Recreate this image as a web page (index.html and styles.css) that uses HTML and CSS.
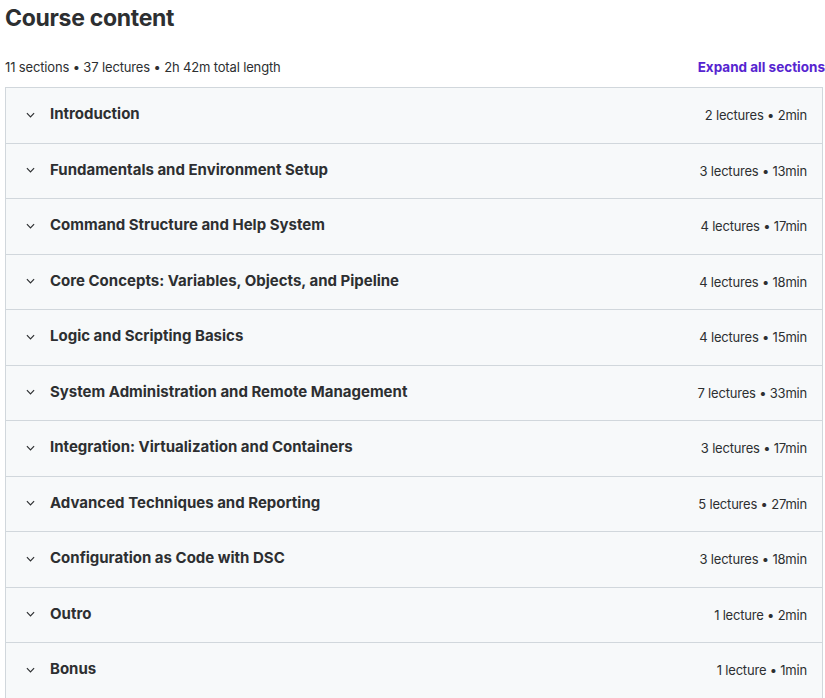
FILE: index.html
```html
<!DOCTYPE html>
<html>
  <head>
    <title>Course content</title>
    <link rel="stylesheet" href="styles.css">
  </head>
  <body>
    <div class="curriculum">
      <h2 class="title">Course content</h2>
      <div class="summary">
        <span class="stats">11 sections • 37 lectures • 2h 42m total length</span>
        <button class="expand-btn">Expand all sections</button>
      </div>

      <div class="sections">
        <div class="section">
          <svg class="chevron" viewBox="0 0 10 6"><path d="M1 1l4 4 4-4" /></svg>
          <span class="section-title">Introduction</span>
          <span class="section-meta">2 lectures • 2min</span>
        </div>
        <div class="section">
          <svg class="chevron" viewBox="0 0 10 6"><path d="M1 1l4 4 4-4" /></svg>
          <span class="section-title">Fundamentals and Environment Setup</span>
          <span class="section-meta">3 lectures • 13min</span>
        </div>
        <div class="section">
          <svg class="chevron" viewBox="0 0 10 6"><path d="M1 1l4 4 4-4" /></svg>
          <span class="section-title">Command Structure and Help System</span>
          <span class="section-meta">4 lectures • 17min</span>
        </div>
        <div class="section">
          <svg class="chevron" viewBox="0 0 10 6"><path d="M1 1l4 4 4-4" /></svg>
          <span class="section-title">Core Concepts: Variables, Objects, and Pipeline</span>
          <span class="section-meta">4 lectures • 18min</span>
        </div>
        <div class="section">
          <svg class="chevron" viewBox="0 0 10 6"><path d="M1 1l4 4 4-4" /></svg>
          <span class="section-title">Logic and Scripting Basics</span>
          <span class="section-meta">4 lectures • 15min</span>
        </div>
        <div class="section">
          <svg class="chevron" viewBox="0 0 10 6"><path d="M1 1l4 4 4-4" /></svg>
          <span class="section-title">System Administration and Remote Management</span>
          <span class="section-meta">7 lectures • 33min</span>
        </div>
        <div class="section">
          <svg class="chevron" viewBox="0 0 10 6"><path d="M1 1l4 4 4-4" /></svg>
          <span class="section-title">Integration: Virtualization and Containers</span>
          <span class="section-meta">3 lectures • 17min</span>
        </div>
        <div class="section">
          <svg class="chevron" viewBox="0 0 10 6"><path d="M1 1l4 4 4-4" /></svg>
          <span class="section-title">Advanced Techniques and Reporting</span>
          <span class="section-meta">5 lectures • 27min</span>
        </div>
        <div class="section">
          <svg class="chevron" viewBox="0 0 10 6"><path d="M1 1l4 4 4-4" /></svg>
          <span class="section-title">Configuration as Code with DSC</span>
          <span class="section-meta">3 lectures • 18min</span>
        </div>
        <div class="section">
          <svg class="chevron" viewBox="0 0 10 6"><path d="M1 1l4 4 4-4" /></svg>
          <span class="section-title">Outro</span>
          <span class="section-meta">1 lecture • 2min</span>
        </div>
        <div class="section">
          <svg class="chevron" viewBox="0 0 10 6"><path d="M1 1l4 4 4-4" /></svg>
          <span class="section-title">Bonus</span>
          <span class="section-meta">1 lecture • 1min</span>
        </div>
      </div>
    </div>
  </body>
</html>
```

FILE: styles.css
```css
body {
  margin: 0;
  background: #ffffff;
  font-family: Inter, "Noto Sans", sans-serif;
  color: #2d2f31;
}
.curriculum {
  width: 818px;
  margin-left: 5px;
}
.title {
  margin: 0;
  padding-top: 4px;
  height: 36px;
  font-size: 23px;
  font-weight: 700;
  letter-spacing: -0.3px;
  line-height: 28px;
}
.summary {
  display: flex;
  justify-content: space-between;
  align-items: center;
  box-sizing: border-box;
  height: 47px;
  padding-top: 6px;
  margin-right: -2px;
  font-size: 13px;
}
.stats {
  color: #2d2f31;
  letter-spacing: -0.15px;
}
.expand-btn {
  background: none;
  border: none;
  padding: 0;
  font-family: inherit;
  font-size: 13.5px;
  font-weight: 700;
  color: #5624d0;
  cursor: pointer;
}
.sections {
  border: 1px solid #d1d7dc;
  border-bottom: none;
}
.section {
  display: flex;
  align-items: center;
  height: 54.5px;
  padding: 0 15px 0 20px;
  background: #f7f9fa;
  border-bottom: 1px solid #d1d7dc;
  cursor: pointer;
}
.chevron {
  width: 9px;
  height: 6px;
  fill: none;
  stroke: #2d2f31;
  stroke-width: 1.3;
  margin-right: 15px;
  margin-top: -1px;
}
.section-title {
  flex: 1;
  font-size: 15px;
  font-weight: 700;
  margin-top: -3px;
}
.section-meta {
  font-size: 13px;
  color: #2d2f31;
  letter-spacing: -0.2px;
}
```
